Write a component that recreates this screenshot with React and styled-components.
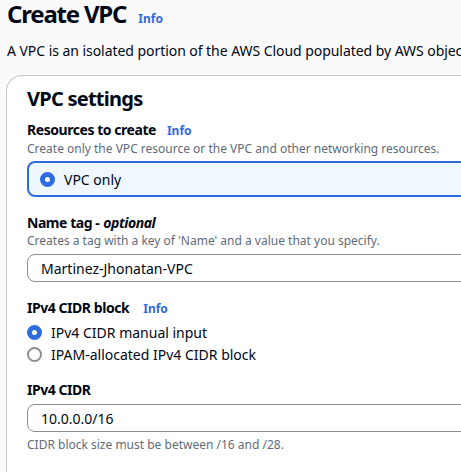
import styled, { createGlobalStyle } from "styled-components";

const GlobalStyle = createGlobalStyle`
  html, body {
    margin: 0;
    padding: 0;
    overflow: hidden;
    background: #fafafa;
  }
  body {
    font-family: 'Noto Sans', 'Open Sans', Arial, sans-serif;
    color: #000716;
  }
`

const Page = styled.div`
  width: 720px;
  padding: 0 0 0 6px;
`

const Header = styled.div`
  display: flex;
  align-items: baseline;
  gap: 12px;
`

const Title = styled.h1`
  margin: 0;
  font-size: 24px;
  line-height: 28px;
  font-weight: 700;
  letter-spacing: -1.2px;
  padding-left: 1px;
`

const Info = styled.span`
  font-size: 12px;
  font-weight: 700;
  letter-spacing: 0;
  color: #2f6be0;
  margin-left: ${props => props.gap || 0}px;
`

const Lead = styled.p`
  margin: 13px 0 0 1px;
  font-size: 14px;
  line-height: 20px;
  letter-spacing: -0.05px;
  white-space: nowrap;
`

const Card = styled.section`
  margin-top: 14px;
  background: #ffffff;
  border: 1px solid #c6c6cd;
  border-right: none;
  border-radius: 16px 0 0 0;
  padding: 11px 0 30px 20px;
`

const CardTitle = styled.h2`
  margin: 0;
  font-size: 20px;
  line-height: 24px;
  font-weight: 700;
  letter-spacing: -0.75px;
`

const Field = styled.div`
  margin-top: ${props => props.top}px;
`

const Label = styled.div`
  font-size: 14px;
  line-height: 20px;
  font-weight: 700;
  letter-spacing: -0.45px;
  display: flex;
  align-items: baseline;

  em {
    font-style: italic;
    margin-left: 4px;
  }
`

const Hint = styled.div`
  font-size: 12px;
  line-height: 16px;
  color: #5f6b7a;
  margin-top: ${props => props.top || 0}px;
  white-space: nowrap;
`

const Tile = styled.div`
  margin-top: 4px;
  height: 32px;
  border: 2px solid #2f6be0;
  border-radius: 8px;
  background: #f0f8ff;
  display: flex;
  align-items: center;
  padding-left: 11px;
  gap: 9px;
  font-size: 14px;
`

const Radio = styled.span`
  box-sizing: border-box;
  width: 15px;
  height: 15px;
  border-radius: 50%;
  flex: none;
  background: #ffffff;
  border: ${props => props.checked ? "5px solid #2f6be0" : "2px solid #8c8c94"};
`

const RadioGroup = styled.div`
  margin-top: 2px;
  display: flex;
  flex-direction: column;
`

const RadioRow = styled.label`
  height: 22px;
  display: flex;
  align-items: center;
  gap: 9px;
  font-size: 14px;
`

const Input = styled.div`
  box-sizing: border-box;
  margin-top: ${props => props.top}px;
  height: 28px;
  border: 1px solid #8c8c94;
  border-radius: 8px;
  padding-left: 13px;
  display: flex;
  align-items: center;
  font-size: 14px;
`

const App = () => {
  return (
    <>
      <GlobalStyle />
      <Page>
        <Header>
          <Title>Create VPC</Title>
          <Info>Info</Info>
        </Header>
        <Lead>
          A VPC is an isolated portion of the AWS Cloud populated by AWS objects, such as Amazon EC2 instances.
        </Lead>

        <Card>
          <CardTitle>VPC settings</CardTitle>

          <Field top={9}>
            <Label>
              Resources to create
              <Info gap={11}>Info</Info>
            </Label>
            <Hint>Create only the VPC resource or the VPC and other networking resources.</Hint>
            <Tile>
              <Radio checked />
              VPC only
            </Tile>
          </Field>

          <Field top={16}>
            <Label>
              Name tag - <em>optional</em>
            </Label>
            <Hint>Creates a tag with a key of 'Name' and a value that you specify.</Hint>
            <Input top={5}>Martinez-Jhonatan-VPC</Input>
          </Field>

          <Field top={16}>
            <Label>
              IPv4 CIDR block
              <Info gap={14}>Info</Info>
            </Label>
            <RadioGroup>
              <RadioRow>
                <Radio checked />
                IPv4 CIDR manual input
              </RadioRow>
              <RadioRow>
                <Radio />
                IPAM-allocated IPv4 CIDR block
              </RadioRow>
            </RadioGroup>
          </Field>

          <Field top={15}>
            <Label>IPv4 CIDR</Label>
            <Input top={4}>10.0.0.0/16</Input>
            <Hint top={5}>CIDR block size must be between /16 and /28.</Hint>
          </Field>
        </Card>
      </Page>
    </>
  )
}

export default App;
